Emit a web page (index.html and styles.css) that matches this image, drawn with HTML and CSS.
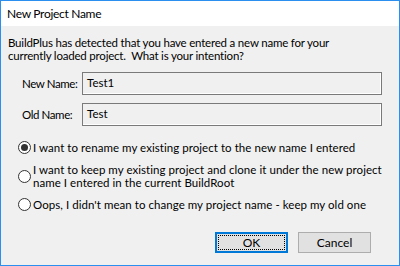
FILE: index.html
```html
<!DOCTYPE html>
<html>
<head>
<meta charset="utf-8">
<link rel="stylesheet" href="styles.css">
</head>
<body>
<div class="window">
  <div class="titlebar">New Project Name</div>
  <div class="content">
    <p class="intro"><span class="line">BuildPlus has detected that you have entered a new name for your</span><span class="line">currently loaded project.&nbsp; What is your intention?</span></p>
    <div class="fields">
      <div class="label">New Name:</div>
      <div class="textbox">Test1</div>
      <div class="label">Old Name:</div>
      <div class="textbox">Test</div>
    </div>
    <div class="options">
      <div class="option"><span class="radio checked"></span><span class="opt-text"><span class="line">I want to rename my existing project to the new name I entered</span></span></div>
      <div class="option"><span class="radio"></span><span class="opt-text"><span class="line">I want to keep my existing project and clone it under the new project</span><span class="line">name I entered in the current BuildRoot</span></span></div>
      <div class="option"><span class="radio"></span><span class="opt-text"><span class="line">Oops, I didn't mean to change my project name - keep my old one</span></span></div>
    </div>
    <div class="buttons">
      <div class="btn btn-default"><span class="focus">OK</span></div>
      <div class="btn">Cancel</div>
    </div>
  </div>
</div>
</body>
</html>
```
FILE: styles.css
```css
html, body {
  margin: 0;
  padding: 0;
  background: #f0f0f0;
}
.window {
  box-sizing: border-box;
  width: 400px;
  height: 266px;
  border: 1px solid #2b8ff0;
  display: flex;
  flex-direction: column;
  font-family: Lato, "Noto Sans", sans-serif;
  font-size: 11.5px;
  color: #000;
  white-space: nowrap;
}
.titlebar {
  background: #fff;
  height: 25px;
  line-height: 25px;
  padding-left: 6px;
  flex: none;
  font-size: 12px;
  letter-spacing: -0.3px;
}
.content {
  flex: 1;
  background: #f0f0f0;
  display: flex;
  flex-direction: column;
  padding: 10px 0 0 7px;
}
.intro {
  margin: 0;
  display: flex;
  flex-direction: column;
  letter-spacing: -0.2px;
}
.line {
  display: block;
  height: 13px;
  line-height: 13px;
}
.fields {
  margin-top: 10px;
  margin-left: 14px;
  display: grid;
  grid-template-columns: 60px 300px;
  row-gap: 8px;
  align-items: center;
}
.label {
  line-height: 23px;
  letter-spacing: -0.4px;
}
.textbox {
  box-sizing: border-box;
  height: 23px;
  border: 1px solid #7a7a7a;
  box-shadow: inset -1px -1px 0 #fff;
  padding-left: 4px;
  line-height: 20px;
}
.options {
  margin-top: 15px;
  margin-left: 10px;
  display: flex;
  flex-direction: column;
  gap: 9px;
}
.option {
  display: flex;
  align-items: center;
  gap: 2px;
}
.radio {
  box-sizing: border-box;
  width: 13px;
  height: 13px;
  border: 1px solid #333;
  border-radius: 50%;
  background: #fff;
  flex: none;
  display: flex;
  align-items: center;
  justify-content: center;
}
.radio.checked::after {
  content: "";
  width: 7px;
  height: 7px;
  border-radius: 50%;
  background: #333;
}
.opt-text {
  display: flex;
  flex-direction: column;
  letter-spacing: 0.05px;
}
.buttons {
  margin-top: auto;
  margin-bottom: 12px;
  margin-right: 28px;
  display: flex;
  justify-content: flex-end;
  gap: 10px;
}
.btn {
  box-sizing: border-box;
  width: 73px;
  height: 21px;
  border: 1px solid #adadad;
  background: #e1e1e1;
  display: flex;
  align-items: center;
  justify-content: center;
  font-size: 12px;
}
.btn-default {
  border: 2px solid #0078d7;
  padding: 1px;
}
.focus {
  box-sizing: border-box;
  width: 100%;
  height: 100%;
  border: 1px dotted #000;
  display: flex;
  align-items: center;
  justify-content: center;
}
```
